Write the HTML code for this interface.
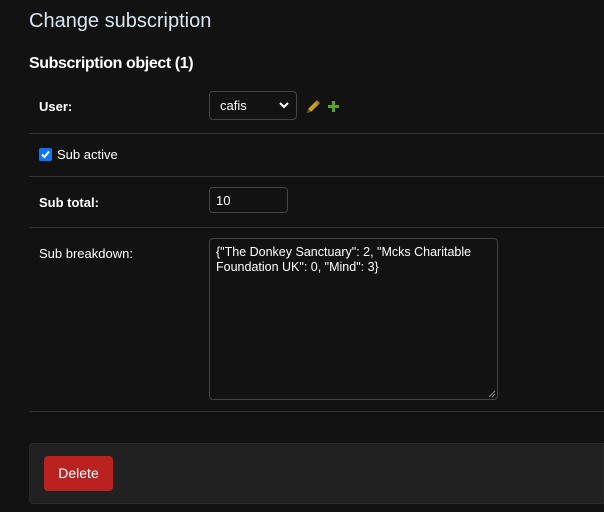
<!DOCTYPE html>
<html><head><meta charset="utf-8"><style>
body{margin:0;width:604px;height:512px;background:#121212;font-family:"Liberation Sans",sans-serif;color:#eee;position:relative;overflow:hidden}
.a{position:absolute}
.sep{position:absolute;left:29px;right:0;height:1px;background:#333}
.lbl{font-size:13px;color:#fff}
.b{font-weight:bold}
.box{position:absolute;border:1px solid #444;border-radius:4px;background:#121212;box-sizing:border-box}
</style></head><body>
<div class="a" style="left:29px;top:10px;font-size:20px;font-weight:300;color:#d8e6f0">Change subscription</div>
<div class="a b" style="left:29px;top:55px;font-size:16px;color:#fff;letter-spacing:-0.4px">Subscription object (1)</div>

<div class="a lbl b" style="left:39px;top:99px">User:</div>
<div class="box" style="left:209px;top:91px;width:88px;height:29px"></div>
<div class="a" style="left:220px;top:98px;font-size:13px;color:#fff">cafis</div>
<svg class="a" style="left:278px;top:100px" width="12" height="10" viewBox="0 0 12 10"><path d="M2 3l4 4 4-4" stroke="#fff" stroke-width="2" fill="none"/></svg>
<svg class="a" style="left:306px;top:99px" width="14" height="15" viewBox="0 0 14 15"><path d="M1 14l1.5-4.5 7-7 3 3-7 7z" fill="#c8a020"/><path d="M1 14l1.5-4 2.5 2.5z" fill="#6a5010"/><path d="M9.5 2.5l1.5-1.5 3 3-1.5 1.5z" fill="#a88010"/></svg>
<svg class="a" style="left:327px;top:100px" width="13" height="13" viewBox="0 0 13 13"><path d="M5 1h3v4h4v3H8v4H5V8H1V5h4z" fill="#5fa02a"/></svg>
<div class="sep" style="top:133px"></div>

<div class="a" style="left:39px;top:148px;width:13px;height:13px;background:#0a75ff;border-radius:2px"><svg width="13" height="13" viewBox="0 0 13 13" style="display:block"><path d="M3 6.5l2.5 2.5 4.5-5.5" stroke="#fff" stroke-width="2" fill="none"/></svg></div>
<div class="a lbl" style="left:57px;top:147px">Sub active</div>
<div class="sep" style="top:176px"></div>

<div class="a lbl b" style="left:39px;top:195px">Sub total:</div>
<div class="box" style="left:209px;top:187px;width:79px;height:26px"></div>
<div class="a" style="left:216px;top:193px;font-size:13px;color:#fff">10</div>
<div class="sep" style="top:227px"></div>

<div class="a lbl" style="left:39px;top:246px">Sub breakdown:</div>
<div class="box" style="left:209px;top:238px;width:289px;height:162px"></div>
<div class="a" style="left:216px;top:245px;width:280px;font-size:12.5px;line-height:15px;color:#fff">{"The Donkey Sanctuary": 2, "Mcks Charitable Foundation UK": 0, "Mind": 3}</div>
<svg class="a" style="left:488px;top:390px" width="8" height="8" viewBox="0 0 8 8"><path d="M1 7L7 1M4 7L7 4" stroke="#888" stroke-width="1"/></svg>
<div class="sep" style="top:411px"></div>

<div class="a" style="left:29px;top:443px;right:0;height:61px;background:#212121;border:1px solid #2a2a2a;border-radius:4px 0 0 4px;box-sizing:border-box"></div>
<div class="a" style="left:44px;top:456px;width:69px;height:35px;background:#ba2121;border-radius:4px;color:#fff;font-size:14px;line-height:35px;text-align:center">Delete</div>
</body></html>
